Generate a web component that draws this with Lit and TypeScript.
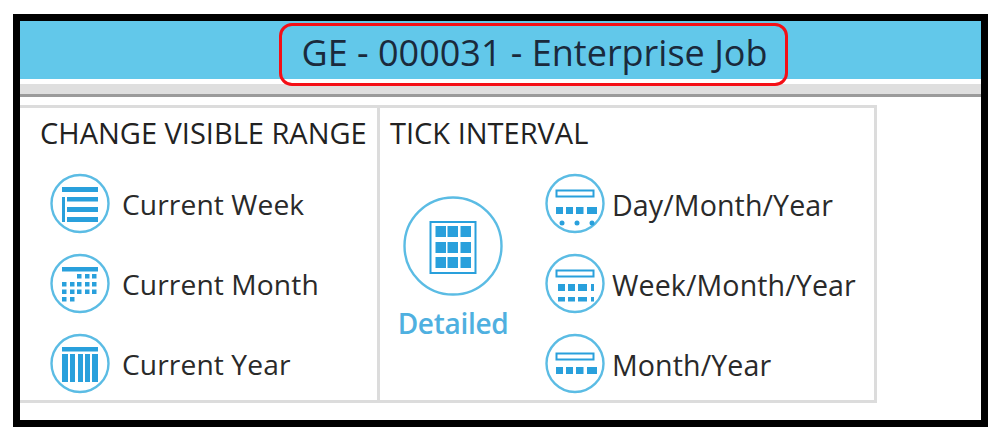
import { LitElement, html, css, svg } from "lit";
import { customElement } from "lit/decorators.js";

const B = "#29a0dc";
const r = (x: number, y: number, w: number, h: number) => svg`<rect x=${x} y=${y} width=${w} height=${h} fill=${B} />`;
const grid = (xs: number[], y: number, s = 4) => xs.map((x) => r(x, y, s, s));

const glyphs: Record<string, unknown> = {
  week: svg`${r(13, 14, 36, 5)}${r(13, 24, 3, 25)}${r(18, 24, 31, 4.5)}${r(18, 34, 31, 5)}${r(18, 44, 31, 5)}`,
  month: svg`${r(13, 14, 36, 4.5)}${grid([28, 36, 43], 21, 4.5)}${grid([13, 21, 28, 36, 43], 29, 4.5)}${grid([13, 21, 28, 36, 43], 36.5, 4.5)}${grid([13, 21], 44, 4.5)}`,
  year: svg`${r(13, 14, 36, 4.5)}${r(13, 21, 6, 28)}${r(21, 21, 5, 28)}${r(29, 21, 5, 28)}${r(36, 21, 5, 28)}${r(43, 21, 6, 28)}`,
  day: svg`<rect x="12.5" y="17.5" width="37" height="6" fill="none" stroke=${B} stroke-width="2" />
    ${r(12, 34, 7, 7)}${r(22, 34, 7, 7)}${r(32, 34, 7.5, 7)}${r(43, 34, 10, 7)}
    <circle cx="18" cy="50" r="2.5" fill=${B} /><circle cx="33" cy="50" r="2.5" fill=${B} /><circle cx="48" cy="50" r="2.5" fill=${B} />`,
  wk: svg`<rect x="12.5" y="17.5" width="37" height="6" fill="none" stroke=${B} stroke-width="2" />
    ${r(14, 31, 7, 7)}${r(24, 31, 7, 7)}${r(34, 31, 9, 7)}${r(47, 31, 3, 7)}
    ${r(14, 44, 7, 4.5)}${r(24, 44, 7, 4.5)}${r(34, 44, 9, 4.5)}${r(47, 44, 3, 4.5)}`,
  mon: svg`<rect x="12.5" y="20.5" width="37" height="6" fill="none" stroke=${B} stroke-width="2" />
    ${r(12, 34, 7, 7)}${r(22, 34, 7, 7)}${r(32, 34, 7.5, 7)}${r(43, 34, 10, 7)}`,
};

const icon = (k: string) => html`<svg class="ic" viewBox="0 0 62 62" width="62" height="62">
  <circle cx="31" cy="30.5" r="28.5" fill="#fff" stroke="#5bbce4" stroke-width="2.4" />${glyphs[k]}
</svg>`;

@customElement("app-root")
export class AppRoot extends LitElement {
  static styles = css`
    :host { display: block; width: 1002px; height: 436px; background: #fff; overflow: hidden;
      font-family: "Open Sans", "Noto Sans", sans-serif; color: #2a2a2a; }
    .frame { box-sizing: border-box; width: 975px; height: 413px; margin: 14px 0 0 13px; border: 7px solid #000; background: #fff; }
    .bar { height: 58px; background: #62c8ea; display: flex; padding-left: 259px; }
    .title { box-sizing: border-box; flex: none; width: 509px; height: 63px; margin-top: 2px; padding: 0 0 4px 2px; border: 3px solid #f40f16; border-radius: 13px;
      display: flex; align-items: center; justify-content: center; font-size: 36px; color: #1a2a3c; white-space: nowrap; }
    .strip { height: 18px; box-sizing: border-box; border-top: 5px solid #fff; border-bottom: 3px solid #9b9b9b; background: #dfdfdf; }
    .panel { box-sizing: border-box; width: 857px; height: 298px; margin-top: 8px; border: 3px solid #dcdcdc; border-left: 0; display: flex; }
    .sec { box-sizing: border-box; height: 100%; }
    .a { width: 360px; border-right: 3px solid #dcdcdc; padding: 7px 0 0 20px; }
    .b { flex: 1; padding: 7px 0 0 10px; }
    h2 { margin: 0; font-weight: 400; font-size: 29px; line-height: 36px; white-space: nowrap; color: #222; }
    .list { display: flex; flex-direction: column; gap: 18px; margin-top: 22px; }
    .a .list { margin-left: 9px; }
    .row { display: flex; align-items: center; height: 62px; gap: 11px; font-size: 28.2px; letter-spacing: 0.1px; white-space: nowrap; }
    .b .row { gap: 6px; font-size: 28.6px; }
    .ic { flex: none; display: block; }
    .cols { display: flex; }
    .big { width: 102px; margin: 45px 0 0 12px; flex: none; display: flex; flex-direction: column; align-items: center; }
    .big .ic { width: 102px; height: 102px; }
    .lab { color: #4fb0e0; font-size: 28px; font-weight: 600; margin-top: 6px; letter-spacing: -0.3px; line-height: 38px; }
    .right { margin-left: 40px; }
  `;

  render() {
    return html`<div class="frame">
      <div class="bar"><div class="title">GE - 000031 - Enterprise Job</div></div>
      <div class="strip"></div>
      <div class="panel">
        <section class="sec a">
          <h2>CHANGE VISIBLE RANGE</h2>
          <div class="list">
            <div class="row">${icon("week")}Current Week</div>
            <div class="row">${icon("month")}Current Month</div>
            <div class="row">${icon("year")}Current Year</div>
          </div>
        </section>
        <section class="sec b">
          <h2>TICK INTERVAL</h2>
          <div class="cols">
            <div class="big">
              <svg class="ic" viewBox="0 0 102 102">
                <circle cx="51" cy="50" r="48.5" fill="#fff" stroke="#5bbce4" stroke-width="2.4" />
                <rect x="28.5" y="26" width="45" height="51" fill="none" stroke=${B} stroke-width="2" />
                ${[33.5, 45.5, 58.5].flatMap((x) => [30, 46, 61].map((y) => r(x, y, 10.5, 11)))}
              </svg>
              <div class="lab">Detailed</div>
            </div>
            <div class="right">
              <div class="list">
                <div class="row">${icon("day")}Day/Month/Year</div>
                <div class="row">${icon("wk")}Week/Month/Year</div>
                <div class="row">${icon("mon")}Month/Year</div>
              </div>
            </div>
          </div>
        </section>
      </div>
    </div>`;
  }
}
